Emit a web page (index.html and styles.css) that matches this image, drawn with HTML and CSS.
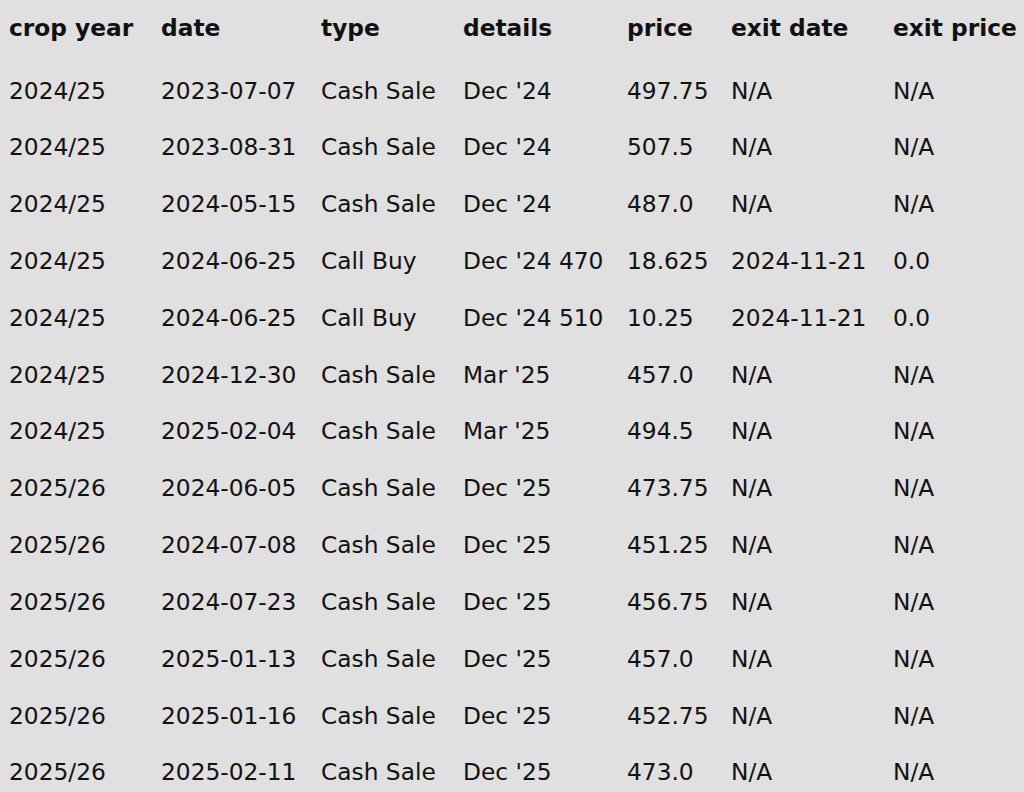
FILE: index.html
```html
<!DOCTYPE html>
<html>
<head>
<meta charset="utf-8">
<link rel="stylesheet" href="styles.css">
</head>
<body>
<table class="trades">
<colgroup>
<col class="c-crop"><col class="c-date"><col class="c-type"><col class="c-details"><col class="c-price"><col class="c-exitdate"><col class="c-exitprice">
</colgroup>
<thead>
<tr><th>crop year</th><th>date</th><th>type</th><th>details</th><th>price</th><th>exit date</th><th>exit price</th></tr>
</thead>
<tbody>
<tr><td>2024/25</td><td>2023-07-07</td><td>Cash Sale</td><td>Dec '24</td><td>497.75</td><td>N/A</td><td>N/A</td></tr>
<tr><td>2024/25</td><td>2023-08-31</td><td>Cash Sale</td><td>Dec '24</td><td>507.5</td><td>N/A</td><td>N/A</td></tr>
<tr><td>2024/25</td><td>2024-05-15</td><td>Cash Sale</td><td>Dec '24</td><td>487.0</td><td>N/A</td><td>N/A</td></tr>
<tr><td>2024/25</td><td>2024-06-25</td><td>Call Buy</td><td>Dec '24 470</td><td>18.625</td><td>2024-11-21</td><td>0.0</td></tr>
<tr><td>2024/25</td><td>2024-06-25</td><td>Call Buy</td><td>Dec '24 510</td><td>10.25</td><td>2024-11-21</td><td>0.0</td></tr>
<tr><td>2024/25</td><td>2024-12-30</td><td>Cash Sale</td><td>Mar '25</td><td>457.0</td><td>N/A</td><td>N/A</td></tr>
<tr><td>2024/25</td><td>2025-02-04</td><td>Cash Sale</td><td>Mar '25</td><td>494.5</td><td>N/A</td><td>N/A</td></tr>
<tr><td>2025/26</td><td>2024-06-05</td><td>Cash Sale</td><td>Dec '25</td><td>473.75</td><td>N/A</td><td>N/A</td></tr>
<tr><td>2025/26</td><td>2024-07-08</td><td>Cash Sale</td><td>Dec '25</td><td>451.25</td><td>N/A</td><td>N/A</td></tr>
<tr><td>2025/26</td><td>2024-07-23</td><td>Cash Sale</td><td>Dec '25</td><td>456.75</td><td>N/A</td><td>N/A</td></tr>
<tr><td>2025/26</td><td>2025-01-13</td><td>Cash Sale</td><td>Dec '25</td><td>457.0</td><td>N/A</td><td>N/A</td></tr>
<tr><td>2025/26</td><td>2025-01-16</td><td>Cash Sale</td><td>Dec '25</td><td>452.75</td><td>N/A</td><td>N/A</td></tr>
<tr><td>2025/26</td><td>2025-02-11</td><td>Cash Sale</td><td>Dec '25</td><td>473.0</td><td>N/A</td><td>N/A</td></tr>
</tbody>
</table>
</body>
</html>
```
FILE: styles.css
```css
html, body {
  margin: 0;
  padding: 0;
  background: #e0e0e0;
  overflow: hidden;
}
body {
  padding-left: 9px;
  font-family: "DejaVu Sans", sans-serif;
  font-size: 23.3px;
  color: #111;
}
.trades {
  border-collapse: collapse;
  white-space: nowrap;
  table-layout: fixed;
  width: 1044px;
}
.c-crop { width: 152px; }
.c-date { width: 160px; }
.c-type { width: 142px; }
.c-details { width: 164px; }
.c-price { width: 104px; }
.c-exitdate { width: 162px; }
.c-exitprice { width: 160px; }
.trades th,
.trades td {
  text-align: left;
  padding: 0;
  height: 56.83px;
  vertical-align: middle;
  overflow: visible;
}
.trades th {
  font-weight: bold;
  height: 55.6px;
  padding-bottom: 6px;
}
```
